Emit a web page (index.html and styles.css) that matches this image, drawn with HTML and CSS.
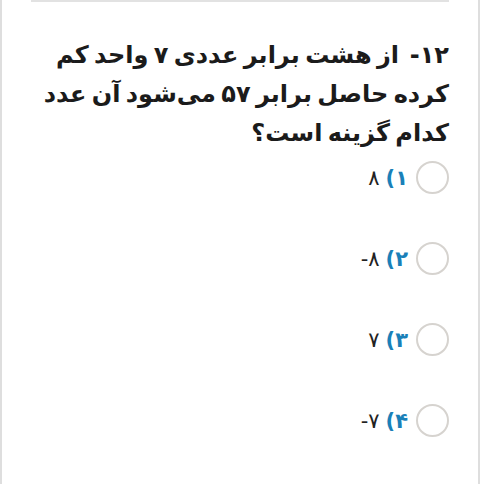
FILE: index.html
```html
<!DOCTYPE html>
<html lang="fa" dir="rtl">
<head>
<meta charset="utf-8">
<link rel="stylesheet" href="styles.css">
</head>
<body>
<div class="frame">
  <div class="topline"></div>
  <div class="question">
    <h1 class="title">۱۲-&nbsp; از هشت برابر عددی ۷ واحد کم کرده حاصل برابر ۵۷ می‌شود آن عدد کدام گزینه است؟</h1>
    <ul class="options">
      <li class="option"><span class="radio"></span><span class="label">۱)</span><span class="value">۸</span></li>
      <li class="option"><span class="radio"></span><span class="label">۲)</span><span class="value ltr">-۸</span></li>
      <li class="option"><span class="radio"></span><span class="label">۳)</span><span class="value">۷</span></li>
      <li class="option"><span class="radio"></span><span class="label">۴)</span><span class="value ltr">-۷</span></li>
    </ul>
  </div>
</div>
</body>
</html>
```
FILE: styles.css
```css
html, body {
  margin: 0;
  padding: 0;
  background: #fff;
}
body {
  font-family: "DejaVu Sans", "Noto Sans", sans-serif;
  color: #1b1b1b;
}
.frame {
  box-sizing: border-box;
  width: 480px;
  height: 484px;
  border-left: 2px solid #dedede;
  border-right: 2px solid #dedede;
  overflow: hidden;
}
.topline {
  height: 2px;
  background: #e2e2e2;
  margin: 0 29px 0 29px;
}
.question {
  padding: 34px 29px 0 20px;
}
.title {
  margin: 0;
  font-size: 24px;
  font-weight: bold;
  line-height: 39px;
  word-spacing: -3px;
  text-align: right;
}
.options {
  list-style: none;
  margin: 8px 0 0 0;
  padding: 0;
  display: flex;
  flex-direction: column;
  gap: 48px;
}
.option {
  display: flex;
  align-items: center;
  height: 33px;
  font-size: 21px;
}
.radio {
  box-sizing: border-box;
  width: 33px;
  height: 33px;
  border-radius: 50%;
  border: 2px solid #d6d3cf;
  margin-left: 8px;
  flex: none;
}
.label {
  color: #1a80b8;
  font-weight: bold;
  margin-left: 6px;
}
.value {
  color: #222;
}
.ltr {
  direction: ltr;
  unicode-bidi: isolate;
}
```
